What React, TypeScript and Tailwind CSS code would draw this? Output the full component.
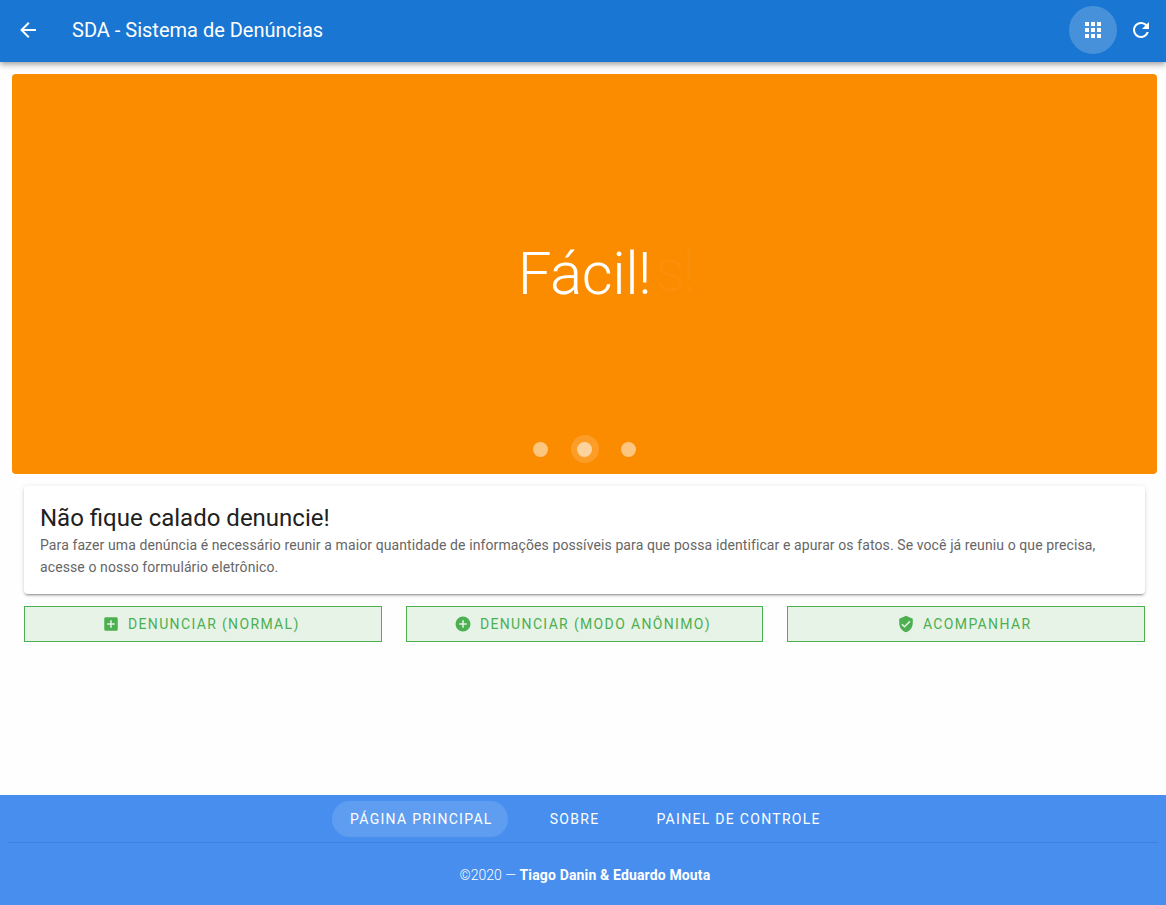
const ICONS = {
  back: 'M20,11V13H8L13.5,18.5L12.08,19.92L4.16,12L12.08,4.08L13.5,5.5L8,11H20Z',
  apps: 'M16,20H20V16H16M16,14H20V10H16M10,8H14V4H10M16,8H20V4H16M10,14H14V10H10M4,14H8V10H4M4,20H8V16H4M10,20H14V16H10M4,8H8V4H4V8Z',
  refresh:
    'M17.65,6.35C16.2,4.9 14.21,4 12,4A8,8 0 0,0 4,12A8,8 0 0,0 12,20C15.73,20 18.84,17.45 19.73,14H17.65C16.83,16.33 14.61,18 12,18A6,6 0 0,1 6,12A6,6 0 0,1 12,6C13.66,6 15.14,6.69 16.22,7.78L13,11H20V4L17.65,6.35Z',
  plusBox:
    'M17,13H13V17H11V13H7V11H11V7H13V11H17M19,3H5C3.89,3 3,3.89 3,5V19A2,2 0 0,0 5,21H19A2,2 0 0,0 21,19V5C21,3.89 20.1,3 19,3Z',
  plusCircle:
    'M17,13H13V17H11V13H7V11H11V7H13V11H17M12,2A10,10 0 0,0 2,12A10,10 0 0,0 12,22A10,10 0 0,0 22,12A10,10 0 0,0 12,2Z',
  shield:
    'M10,17L6,13L7.41,11.59L10,14.17L16.59,7.58L18,9M12,1L3,5V11C3,16.55 6.84,21.74 12,23C17.16,21.74 21,16.55 21,11V5L12,1Z',
};

function Icon({ d, className }: { d: string; className: string }) {
  return (
    <svg viewBox="0 0 24 24" fill="currentColor" className={className}>
      <path d={d} />
    </svg>
  );
}

function ActionButton({ icon, label }: { icon: string; label: string }) {
  return (
    <button className="flex h-9 items-center justify-center border border-[#4caf50] bg-[#e8f3e8] text-sm font-[450] tracking-[1.35px] text-[#4caf50]">
      <Icon d={icon} className="mr-2 ml-[-4px] h-[18px] w-[18px]" />
      {label}
    </button>
  );
}

export default function App() {
  return (
    <div className="flex h-[905px] flex-col overflow-hidden bg-[#fefefe] font-['Roboto',sans-serif]">
      {/* App bar */}
      <header className="relative z-10 flex h-[62px] shrink-0 items-center bg-[#1976d2] pr-[13px] pb-[2px] pl-4 text-white shadow-[0_2px_4px_-1px_rgba(0,0,0,0.2),0_4px_5px_0_rgba(0,0,0,0.14),0_1px_10px_0_rgba(0,0,0,0.12)]">
        <Icon d={ICONS.back} className="h-6 w-6" />
        <h1 className="ml-8 flex-1 text-xl leading-8 font-normal">SDA - Sistema de Denúncias</h1>
        <div className="flex h-12 w-12 items-center justify-center rounded-full bg-white/20">
          <Icon d={ICONS.apps} className="h-6 w-6" />
        </div>
        <Icon d={ICONS.refresh} className="ml-3 h-6 w-6" />
      </header>

      {/* Carousel */}
      <section className="relative mx-3 mt-3 flex h-[400px] w-[1145px] shrink-0 items-center justify-center rounded bg-[#fb8c00]">
        <span className="text-[60px] leading-none font-light tracking-[-0.5px] text-white">Fácil!</span>
        <span className="absolute top-[167px] left-[643px] text-[60px] leading-none font-light tracking-[-3px] text-white/[0.03]">
          s!
        </span>
        <div className="absolute bottom-[11px] left-0 flex w-full items-center justify-center gap-[22.5px]">
          <span className="h-[15px] w-[15px] rounded-full bg-white/50" />
          <span className="flex h-[28px] w-[28px] items-center justify-center rounded-full bg-white/[0.15]">
            <span className="h-[15px] w-[15px] rounded-full bg-white/55" />
          </span>
          <span className="h-[15px] w-[15px] rounded-full bg-white/50" />
        </div>
      </section>

      {/* Intro */}
      <section className="mt-3 mr-[21px] ml-6 h-[108px] shrink-0 rounded bg-white px-4 pt-4 shadow-[0_3px_1px_-2px_rgba(0,0,0,0.2),0_2px_2px_0_rgba(0,0,0,0.14),0_1px_5px_0_rgba(0,0,0,0.12)]">
        <h2 className="text-2xl leading-8 font-normal text-[#212121]">Não fique calado denuncie!</h2>
        <p className="text-sm leading-[22px] tracking-[0.1px] text-[#666666]">
          Para fazer uma denúncia é necessário reunir a maior quantidade de informações possíveis para que possa
          identificar e apurar os fatos. Se você já reuniu o que precisa, acesse o nosso formulário eletrônico.
        </p>
      </section>

      {/* Actions */}
      <div className="mt-3 mr-[21px] ml-6 grid shrink-0 grid-cols-3 gap-6">
        <ActionButton icon={ICONS.plusBox} label="DENUNCIAR (NORMAL)" />
        <ActionButton icon={ICONS.plusCircle} label="DENUNCIAR (MODO ANÔNIMO)" />
        <ActionButton icon={ICONS.shield} label="ACOMPANHAR" />
      </div>

      {/* Footer */}
      <footer className="mt-auto flex h-[110px] shrink-0 flex-col bg-[#478eee] text-white">
        <nav className="mx-2 flex h-[48px] items-center justify-center gap-[23px] border-b border-[#3f80d8] pl-1">
          <a className="mr-[2px] flex h-9 items-center rounded-full bg-white/[0.13] pr-[15px] pl-[18px] text-sm font-[450] tracking-[1.3px]">
            PÁGINA PRINCIPAL
          </a>
          <a className="flex h-9 items-center px-[17px] text-sm font-[450] tracking-[1.3px]">SOBRE</a>
          <a className="flex h-9 items-center px-[17px] text-sm font-[450] tracking-[1.3px]">PAINEL DE CONTROLE</a>
        </nav>
        <p className="mt-[22px] pl-1 text-center text-sm leading-5 font-light">
          ©2020 — <strong className="font-bold tracking-[0.15px]">Tiago Danin &amp; Eduardo Mouta</strong>
        </p>
      </footer>
    </div>
  );
}
